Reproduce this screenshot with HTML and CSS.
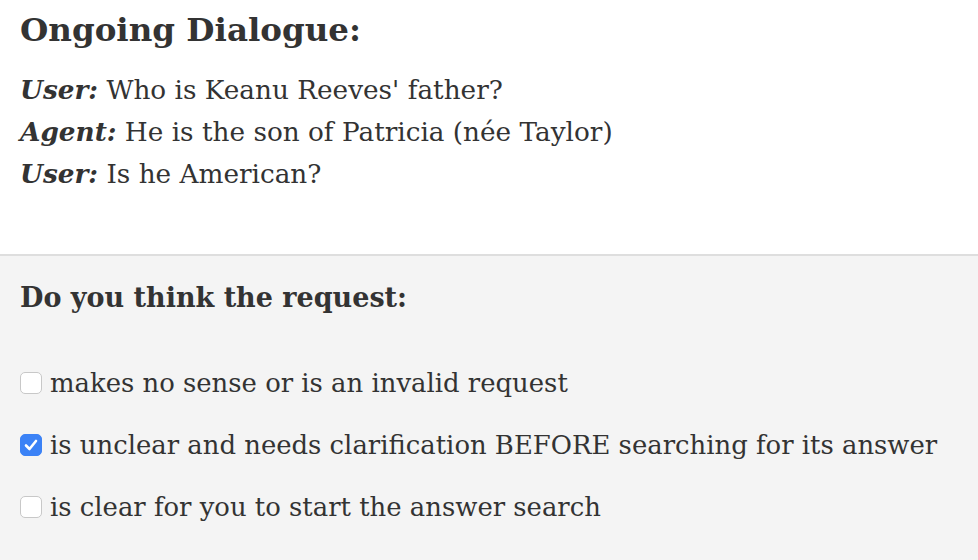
FILE: index.html
```html
<!DOCTYPE html>
<html>
<head>
<meta charset="utf-8">
<link rel="stylesheet" href="styles.css">
</head>
<body>
<section class="dialogue">
  <h2 class="title">Ongoing Dialogue:</h2>
  <div class="turns">
    <p class="turn"><em class="who">User:</em> Who is Keanu Reeves' father?</p>
    <p class="turn"><em class="who">Agent:</em> He is the son of Patricia (née Taylor)</p>
    <p class="turn"><em class="who">User:</em> Is he American?</p>
  </div>
</section>
<section class="question">
  <h3 class="q-title">Do you think the request:</h3>
  <div class="options">
    <label class="option"><span class="box"></span><span>makes no sense or is an invalid request</span></label>
    <label class="option"><span class="box checked"><svg viewBox="0 0 22 22" width="22" height="22"><path d="M6 11.5 L9.5 15 L16 7" fill="none" stroke="#fff" stroke-width="2.6" stroke-linecap="round" stroke-linejoin="round"/></svg></span><span>is unclear and needs clarification BEFORE searching for its answer</span></label>
    <label class="option"><span class="box"></span><span>is clear for you to start the answer search</span></label>
  </div>
</section>
</body>
</html>
```
FILE: styles.css
```css
html, body {
  margin: 0;
  padding: 0;
  height: 100%;
}
body {
  font-family: "DejaVu Serif", Georgia, serif;
  color: #333;
  background: #f4f4f4;
}
.dialogue {
  background: #fff;
  padding: 10px 20px 0 20px;
  box-sizing: border-box;
  border-bottom: 2px solid #dedede;
  height: 256px;
}
.title {
  margin: 0;
  font-size: 32.5px;
  line-height: 40px;
  font-weight: bold;
}
.turns {
  margin-top: 19px;
}
.turn {
  margin: 0;
  font-size: 26.3px;
  line-height: 42px;
  white-space: nowrap;
}
.who {
  font-weight: bold;
  font-style: italic;
}
.question {
  padding: 22px 20px 0 20px;
}
.q-title {
  margin: 0;
  font-size: 27px;
  line-height: 40px;
  font-weight: bold;
}
.options {
  margin-top: 44px;
  display: flex;
  flex-direction: column;
  gap: 20px;
}
.option {
  display: flex;
  align-items: center;
  gap: 8px;
  font-size: 25.9px;
  line-height: 42px;
  white-space: nowrap;
}
.box {
  width: 22px;
  height: 22px;
  box-sizing: border-box;
  border: 1px solid #c8c8c8;
  border-radius: 5px;
  background: #fff;
  display: inline-block;
  flex: none;
}
.box.checked {
  background: #3b82f6;
  border-color: #3b82f6;
  position: relative;
}
.box.checked svg {
  position: absolute;
  left: -1px;
  top: -1px;
}
```
